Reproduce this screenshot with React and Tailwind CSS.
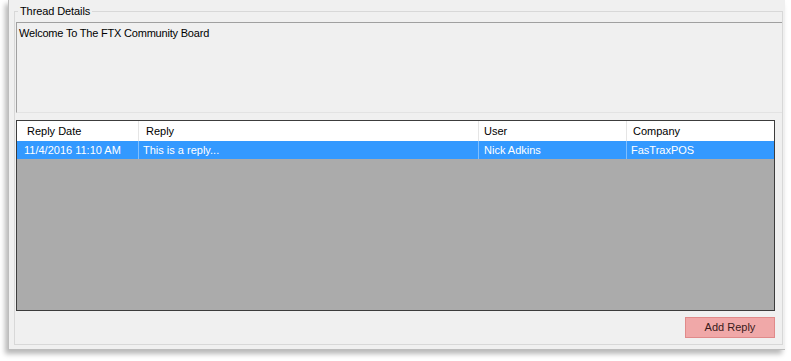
export default function App() {
  const font = { fontFamily: '"Liberation Sans", Arial, sans-serif' };
  return (
    <div className="w-[791px] h-[361px] bg-white overflow-hidden" style={font}>
      <div className="ml-[8px] w-[777px] h-[350px] bg-[#f0f0f0] border-l border-b border-[#bdbdbd] shadow-[-3px_4px_5px_rgba(0,0,0,0.28)] pt-[5px] pl-[5px] pr-[2px]">
        <fieldset className="h-[340px] border border-[#d8d8d8] pb-[6px] flex flex-col m-0 p-0">
          <legend className="ml-[3px] px-[2px] text-[11px] leading-[13px] text-black tracking-[-0.1px]">Thread Details</legend>
          <div className="pl-[1px] flex flex-col flex-1">
            <div className="mt-[4px] h-[91px] border-t border-l border-[#a0a0a0] border-b border-b-[#e3e3e3] bg-[#f0f0f0] px-[2px] pt-[3px] text-[11px] leading-[15px] text-black tracking-[-0.2px]">
              Welcome To The FTX Community Board
            </div>
            <div className="mt-[7px] mr-[7px] h-[191px] border border-[#3c3c3c] bg-[#ababab] flex flex-col">
              <div className="flex h-[20px] bg-white text-[11px] text-black">
                <div className="w-[122px] pl-[10px] flex items-center border-r border-[#e5e5e5]">Reply Date</div>
                <div className="w-[340px] pl-[7px] flex items-center border-r border-[#e5e5e5]">Reply</div>
                <div className="w-[148px] pl-[5px] flex items-center border-r border-[#e5e5e5]">User</div>
                <div className="flex-1 pl-[6px] flex items-center">Company</div>
              </div>
              <div className="flex h-[18px] bg-[#3399ff] text-[11px] text-white">
                <div className="w-[122px] pl-[7px] flex items-center border-r border-[#7fbfff]">11/4/2016 11:10 AM</div>
                <div className="w-[340px] pl-[4px] flex items-center border-r border-[#7fbfff]">This is a reply...</div>
                <div className="w-[148px] pl-[5px] flex items-center border-r border-[#7fbfff]">Nick Adkins</div>
                <div className="flex-1 pl-[4px] flex items-center">FasTraxPOS</div>
              </div>
            </div>
            <div className="flex justify-end mr-[7px] mt-[6px]">
              <button className="w-[90px] h-[21px] bg-[#f0a8a8] border border-[#e08a8a] text-[11px] text-[#3a1a1a] leading-none">Add Reply</button>
            </div>
          </div>
        </fieldset>
      </div>
    </div>
  );
}
